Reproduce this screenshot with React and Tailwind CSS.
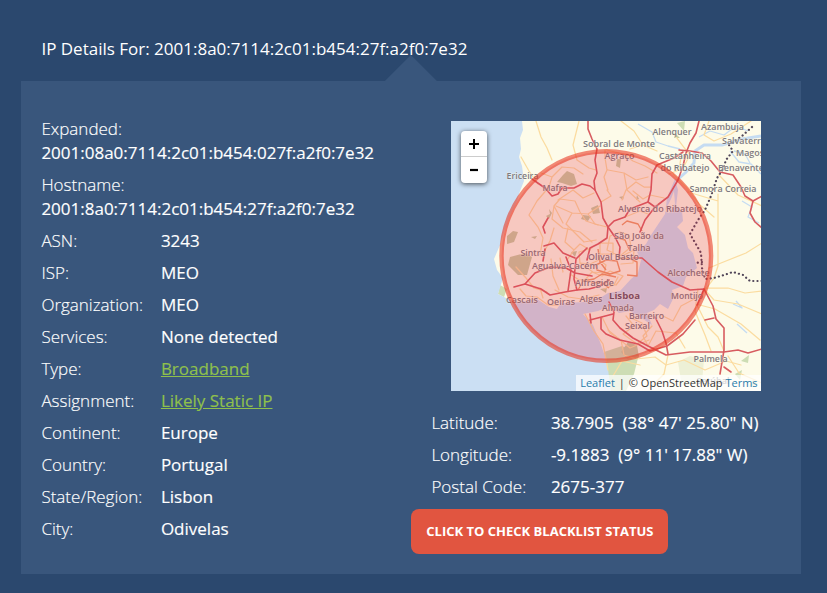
import React from "react";

const details = [
  ["ASN:", "3243"],
  ["ISP:", "MEO"],
  ["Organization:", "MEO"],
  ["Services:", "None detected"],
  ["Type:", "Broadband", true],
  ["Assignment:", "Likely Static IP", true],
  ["Continent:", "Europe"],
  ["Country:", "Portugal"],
  ["State/Region:", "Lisbon"],
  ["City:", "Odivelas"],
];

const position = [
  ["Latitude:", "38.7905\u00a0 (38° 47' 25.80\" N)"],
  ["Longitude:", "-9.1883\u00a0 (9° 11' 17.88\" W)"],
  ["Postal Code:", "2675-377"],
];

// label, centre x, baseline y, width
const places = [
  ["Alenquer", 672, 135, 39],
  ["Azambuja", 722.5, 130, 43],
  ["Salvaterra", 744, 144, 44],
  ["Magos", 750, 156, 28],
  ["Sobral de Monte", 619, 146.5, 72],
  ["Agraço", 619.5, 159, 30],
  ["Castanheira", 685, 158.5, 52],
  ["do Ribatejo", 685, 171, 49],
  ["Benavente", 741, 171, 46],
  ["Samora Correia", 723, 192, 67],
  ["Ericeira", 522.5, 178.5, 32],
  ["Mafra", 555, 191, 25],
  ["Alverca do Ribatejo", 660, 212, 84],
  ["São João da", 639, 238.5, 50],
  ["Talha", 639, 251, 23],
  ["Olival Basto", 613.5, 259.5, 51],
  ["Sintra", 533, 256, 25],
  ["Agualva-Cacém", 565, 269, 66],
  ["Alfragide", 594.5, 285.5, 39],
  ["Alcochete", 688.5, 275.5, 42],
  ["Cascais", 522, 303, 32],
  ["Oeiras", 561, 305, 28],
  ["Alges", 591, 301.5, 23],
  ["Montijo", 687, 299, 32],
  ["Almada", 618, 311, 32],
  ["Barreiro", 646.5, 318.5, 35],
  ["Seixal", 637.5, 328.5, 25],
  ["Palmela", 710.5, 362, 34],
  ["Setúbal", 713, 384, 33],
];

const mainRoads = [
  "M532 179L545 188L552 196L558 194L562 188H574L582 184L590 186L595 190L601 202L603 218L608 227L607 238L598 244L590 248L587 260",
  "M588 121V129L592 139L597 149L595 160L597 173L594 181L595 190",
  "M699 121L696 133L690 143L686 153L683 166L678 180L668 197L655 207L645 220L640 232",
  "M608 227L614 221L625 217L630 209L648 202L651 190L652 174L657 165L674 158L683 152",
  "M679 150L690 151L702 153L711 161L720 172L733 175L741 187L745 196L753 201L762 196",
  "M753 201L750 213L755 222L762 228",
  "M648 202L655 207M608 227L615 237L620 247L619 258",
  "M544 246L554 243L563 253L575 258",
  "M514 287L525 284L535 273L550 267L566 268L575 273L592 276",
  "M525 284L541 289L550 295L565 292L577 290L589 289L600 286L609 280",
  "M587 248L576 259L574 279L577 290M566 257L571 270L568 291",
  "M548 218L543 227L545 233M543 261L545 249",
  "M633 258H642L658 272L672 282L690 290L704 289L713 306L716 319L724 328L724 350L720 374",
  "M609 302L614 312L613 320L620 328L633 338L648 346L660 352L666 355L690 352H724L738 350L748 353L762 349",
  "M601 318V329L606 334L620 340L638 344L650 351L667 346L683 334L695 320",
  "M590 314L591 323M590 320L613 314M655 317L662 331L666 343L668 354M705 320L714 318M724 367L731 372",
  "M704 289L697 305",
];

const streets = [
  "M536 121L541 137L547 148L552 160M521 157L529 171L538 184M579 121L573 145L577 160L589 168L596 170",
  "M541 173L552 177L562 167L574 168L583 174M552 177L549 187L537 201L529 215L538 227L543 238L540 255",
  "M563 223L554 206L560 199L575 201L580 212L586 221L598 225M554 206L552 219L563 228L580 232L592 242",
  "M554 228L550 241L544 252M568 228L565 242L574 250L580 244L590 250M574 250L567 260M580 263L579 252L592 248",
  "M605 150V158L607 170L604 177L608 190M608 170L624 173L636 180L648 177M624 173L627 190L640 202M607 190L611 196L601 202",
  "M558 200L573 190L583 198L594 193M556 206L572 213L588 214L595 224L607 227M588 214L600 206M572 213L566 224L584 242L596 240",
  "M625 217L640 211L648 214M633 191L643 199L650 195L664 198",
  "M607 150L623 154L633 161L645 166L657 173M622 200L626 190L636 182L644 187L651 187",
  "M610 236L620 232L629 235L631 247L620 256L607 250ZM600 243H613V254H600ZM624 255L634 250L633 263L621 264",
  "M580 263L590 264L599 260L606 265L604 273L593 272ZM584 281L592 272L602 276L610 271L623 276L616 285L603 284ZM604 289L614 285L618 277",
  "M516 267L526 278L534 288L547 292M551 259L553 276L559 290M560 258L563 272M570 274L579 280L588 279",
  "M520 289L526 296L537 297L548 305L558 305M540 288L543 298M555 290L568 297L582 299L599 295",
  "M621 121L634 131L643 145L657 151M643 145L630 149M674 134L683 146L690 155L684 166M669 174L679 170L681 157",
  "M673 174L686 187L699 204L714 217M709 121L704 135L714 141L731 134L751 121M719 175L738 195L762 206",
  "M718 194V266L714 278L705 290L714 300L738 304L762 314M718 201L688 192M762 243L746 253L721 263L709 268",
  "M706 288L728 288L745 293L762 291M696 304L715 309L741 324L760 340M698 289L695 311L705 335L711 351",
  "M652 326L643 336L648 346L656 331L676 333L685 348M661 315L673 321L681 306L698 297M608 330L630 348L649 340",
  "M585 314L594 331L603 344L608 370M602 317L610 333L621 340L624 355L636 359L655 357L666 365L684 360L705 370L726 361L741 365",
  "M613 376L622 361L640 365M668 355L664 374L650 388M728 356L739 373L762 383",
  "M626 316L634 326L623 334L637 344L647 336L642 323L631 318M697 305L708 327L718 337L724 351",
];

function LisbonMap() {
  return (
    <svg className="block h-full w-full" viewBox="451 121 310 270" fontFamily="'Open Sans', 'Noto Sans', sans-serif">
      <rect x="451" y="121" width="311" height="270" fill="#fdfbe9" />
      <g fill="#cdddb4">
        <path d="M604 352L622 346L639 354L634 374L626 391H609Z" />
        <path d="M678 362L690 356L704 360L702 382L682 386Z" opacity=".35" />
        <path d="M741 361L749 355L748 363ZM735 374L742 370L740 380ZM753 380L758 384L749 387ZM677 123L685 121L684 131Z" />
        <path d="M500 285L507 289L504 297L498 294Z" />
      </g>
      <path
        fill="#cbdff3"
        d="M451 121H522L523 130L520 138L521 149L519 157L522 166L524 181L520 191L517 201L510 215L505 229L500 245L494 259L497 270L503 278L498 294L508 299L518 302L537 299L549 307L557 309L561 303L568 303L583 302L600 298L608 293L620 291L631 279L638 273L641 260L637 252L646 244L651 235L659 223L665 214L667 198L675 179L678 190L676 207L682 211L683 221L677 227L685 235L688 248L693 253L697 268L686 277L683 286L672 290L674 297L668 309L660 304L654 310L647 313L652 325L643 319L630 311L619 313L610 306L598 311L583 314L593 325L600 342L607 362L611 391H451Z"
      />
      <path fill="#fdfbe9" d="M671 199L674 191L675 204L669 213L665 211Z" />
      <g fill="#c7cda1">
        <path d="M557 182L563 175L567 171L574 174L577 184L571 186L562 183Z" />
        <path d="M507 236L513 231L518 232L514 242L507 244ZM510 257L525 253L532 257L527 275L518 275L508 265ZM549 209L552 213L549 219L546 216L550 214Z" />
        <path d="M583 215L591 216L588 221L581 219ZM591 208L598 205L600 213L593 214ZM531 237L537 236L535 239Z" />
        <path d="M617 159H621L620 168L616 166ZM619 197L624 196L623 200ZM571 252L577 251L575 257ZM600 289L607 288L606 293Z" />
        <path d="M621 352L628 342L637 345L639 357L628 360ZM675 133L680 138L674 138ZM637 195L639 199L636 200Z" />
      </g>
      <g fill="none" stroke="#c5dcf2" strokeLinejoin="round">
        <path strokeWidth="3" d="M676 181L685 173L694 163L695 151L704 145L722 145L742 139L761 136" />
        <path strokeWidth="1.3" d="M638 124L652 132L656 142L668 146L680 149M699 137L710 131L724 135L736 126L748 131M730 151L739 162L751 164L761 174M742 201L752 207L748 217L759 223M734 151L745 154L750 163M736 301L742 308L733 304M737 324L747 333" />
      </g>
      <g fill="none" stroke="#fbdca0" strokeWidth="1.25" strokeLinejoin="round" strokeLinecap="round">
        {streets.map((d) => <path key={d} d={d} />)}
      </g>
      <g fill="none" stroke="#ec9a68" strokeWidth="1.4" strokeLinejoin="round">
        <path d="M615 237L625 240L629 249M596 265L606 260L617 261L620 271L610 274L597 270ZM578 290L583 281L594 279L602 274L616 277M609 288L601 282L591 283M619 258L631 259L637 262V276L627 275M622 225L627 221L638 224L642 231M598 249L600 262L606 270" />
      </g>
      <g fill="none" stroke="#d75c60" strokeWidth="1.6" strokeLinejoin="round" strokeLinecap="round">
        {mainRoads.map((d) => <path key={d} d={d} />)}
      </g>
      <path
        d="M752 127L742 136L729 145L733 151L726 160L723 169L717 178L711 196L705 210L698 220L690 234L697 246L701 253L702 268L705 279L714 278L724 275L733 272L743 275L750 281L762 281M702 262L696 263"
        fill="none" stroke="#514659" strokeWidth="2.2" strokeDasharray="0.1 4.1" strokeLinecap="round" strokeLinejoin="round"
      />
      <g fontSize="8.9" fontWeight="600" textAnchor="middle" fill="#7d7a80" stroke="#fdfbe9" strokeWidth="1.2" strokeOpacity=".5" paintOrder="stroke">
        {places.map(([name, x, y, width]) => (
          <text key={name} x={x} y={y} textLength={width} lengthAdjust="spacingAndGlyphs">{name}</text>
        ))}
        <text x="624.5" y="298.5" fontSize="9" fontWeight="700" fill="#5f5366" textLength="31" lengthAdjust="spacingAndGlyphs">Lisboa</text>
      </g>
      <circle cx="606.3" cy="256" r="104.6" fill="#e83048" fillOpacity=".25" />
      <circle cx="606.3" cy="256" r="104.8" fill="none" stroke="#e8361f" strokeOpacity=".58" strokeWidth="4.4" />
    </svg>
  );
}

function Row({ label, value, link }) {
  return (
    <div className="flex">
      <dt className="w-[119.5px] shrink-0 font-light">{label}</dt>
      <dd className="whitespace-nowrap">
        {link ? <a className="text-[#8fc04c] underline" href="#">{value}</a> : value}
      </dd>
    </div>
  );
}

export default function App() {
  return (
    <main className="h-[593px] w-[827px] overflow-hidden bg-[#2b486e] pl-[21.4px] font-['Open_Sans','Noto_Sans',sans-serif] text-[17px] leading-6 text-white">
      <h1 className="h-[81px] pl-5 pt-[37px] font-normal">
        <span className="inline-block whitespace-nowrap">IP Details For: 2001:8a0:7114:2c01:b454:27f:a2f0:7e32</span>
      </h1>
      <section className="relative flex h-[492.5px] w-[780px] bg-[#39567c]">
        <span className="absolute -top-[26px] left-[363.5px] h-[26px] w-[52px] bg-[#39567c] [clip-path:polygon(50%_0,100%_100%,0_100%)]" />
        <dl className="flex w-[390px] shrink-0 flex-col gap-2 pl-5 pt-9 font-normal [-webkit-text-stroke:0.15px]">
          <div>
            <dt className="font-light">Expanded:</dt>
            <dd>2001:08a0:7114:2c01:b454:027f:a2f0:7e32</dd>
          </div>
          <div>
            <dt className="font-light">Hostname:</dt>
            <dd>2001:8a0:7114:2c01:b454:27f:a2f0:7e32</dd>
          </div>
          {details.map(([label, value, link]) => <Row key={label} label={label} value={value} link={link} />)}
        </dl>
        <div className="flex w-[390px] flex-col items-start pt-10">
          <div className="relative ml-10 h-[270px] w-[310px] overflow-hidden">
            <LisbonMap />
            <div className="absolute left-[10px] top-[10px] flex w-[26px] flex-col rounded bg-white text-black shadow-[0_1px_5px_rgba(0,0,0,0.65)]">
              <button className="flex h-[26px] items-center justify-center border-b border-[#ccc]" aria-label="Zoom in">
                <svg width="12" height="12" viewBox="0 0 12 12" stroke="currentColor" strokeWidth="2"><path d="M6 1V11M1 6H11" /></svg>
              </button>
              <button className="flex h-[26px] items-center justify-center" aria-label="Zoom out">
                <svg width="12" height="12" viewBox="0 0 12 12" stroke="currentColor" strokeWidth="2.2"><path d="M2 6H10" /></svg>
              </button>
            </div>
            <div className="absolute bottom-0 right-0 flex h-4 w-[185px] items-center justify-center gap-1 whitespace-nowrap bg-white/70 text-[11px] leading-4 text-[#333]">
              <a className="text-[#2a7cab]" href="#">Leaflet</a>
              <span>|</span>
              <span>© OpenStreetMap <a className="text-[#2a7cab]" href="#">Terms</a></span>
            </div>
          </div>
          <dl className="ml-5 mt-5 flex flex-col gap-2 [-webkit-text-stroke:0.15px]">
            {position.map(([label, value]) => <Row key={label} label={label} value={value} />)}
          </dl>
          <button className="mt-[10px] h-[45px] w-[257px] whitespace-nowrap rounded-lg bg-[#e15540] pb-0.5 text-[13px] font-bold">
            CLICK TO CHECK BLACKLIST STATUS
          </button>
        </div>
      </section>
    </main>
  );
}
